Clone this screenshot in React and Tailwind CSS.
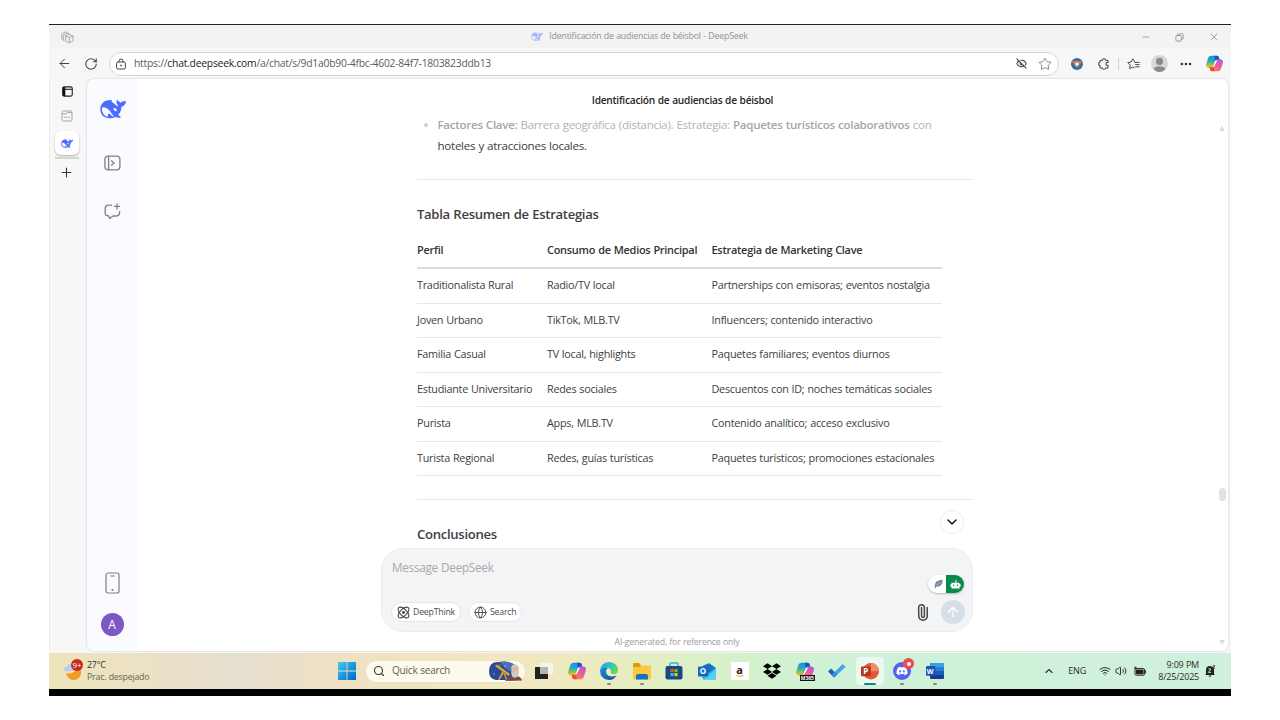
import React from "react";
import {
  ArrowLeft, RotateCw, Star, Minus, X, Ellipsis, Plus, ChevronDown, ChevronUp,
  ArrowUp, Search, Paperclip, Globe, EyeOff, Wifi, Volume2,
} from "lucide-react";
import { FaDropbox, FaDiscord } from "react-icons/fa";

function Whale({ className }) {
  return (
    <svg viewBox="0 0 78 58" className={className} fill="currentColor">
      <path
        fillRule="evenodd"
        d="M1 30C1 14 12 4 26 3C31 1 37 2 35 5C34 8 39 10 43 13C47 16 50 19 53 22C55 20 53 17 51 14C49 10 50 5 51 1C53 1 54 4 56 6C58 8 60 9 62 10C65 7 69 6 73 6C75 6 77 4 78 6C78 13 73 20 64 23C64 32 61 40 55 46C57 49 60 51 62 52C64 54 60 55 56 55C51 55 48 54 45 53C40 56 35 57 29 57C11 57 1 45 1 30ZM6 28C5 38 11 47 20 52C23 53 24 51 24 48C24 43 28 41 31 45C34 49 37 52 42 51C36 46 33 39 29 34C24 28 17 24 10 24C7 24 6 26 6 28ZM41 27C44 24 50 27 51 33C52 36 48 37 46 34C44 33 42 33 41 31C40 30 40 28 41 27Z"
      />
    </svg>
  );
}

function Copilot({ id, className }) {
  return (
    <svg viewBox="0 0 24 24" className={className}>
      <defs>
        <linearGradient id={`${id}a`} x1="0.4" y1="0" x2="0.3" y2="1">
          <stop offset="0" stopColor="#1f8fe8" />
          <stop offset="0.4" stopColor="#22a8c8" />
          <stop offset="0.7" stopColor="#7cc850" />
          <stop offset="1" stopColor="#f6c32c" />
        </linearGradient>
        <linearGradient id={`${id}b`} x1="0.9" y1="0" x2="0.3" y2="1">
          <stop offset="0" stopColor="#a65ce8" />
          <stop offset="0.5" stopColor="#ee5aa0" />
          <stop offset="1" stopColor="#fb8a3c" />
        </linearGradient>
      </defs>
      <path d="M8 1H15C17 1 17.8 2 18.2 3.4L19.2 7H16C14.2 7 13.2 8 12.7 9.6L10.4 16C10 17.4 9 18 8 18H4.2C.6 18 -.5 15.6 .4 12.4L3 4.4C3.8 2 5.4 1 8 1Z" fill={`url(#${id}a)`} />
      <path d="M12 1H15C17 1 17.8 2 18.2 3.4L19.2 7H16C14.5 7 13.6 7.6 13 8.8Z" fill="#1652c8" />
      <path d="M16 23H9C7 23 6.2 22 5.8 20.6L4.8 17H8C9.8 17 10.8 16 11.3 14.4L13.6 8C14 6.6 15 6 16 6H19.8C23.4 6 24.5 8.4 23.6 11.6L21 19.6C20.2 22 18.6 23 16 23Z" fill={`url(#${id}b)`} />
      <path d="M4.8 17H8C9.4 17 10.3 16.4 10.9 15.2L12 23H9C7 23 6.2 22 5.8 20.6Z" fill="#e8503c" />
      <path d="M13.2 7.6L16 7.6L11.2 16.6H8.2C10.2 16 10.8 14.6 11.3 13.2Z" fill="#fff" />
    </svg>
  );
}

function TitleBar() {
  return (
    <div className="flex h-6 shrink-0 items-center justify-between border-t border-[#222] bg-[#f3f3f3] pt-px pr-[11px] pl-3">
      <svg viewBox="0 0 14 14" className="size-[13px] text-[#a4a4a4]" fill="none" stroke="currentColor" strokeWidth="1" strokeLinejoin="round">
        <path d="M5 5.4L9 3.8L13 5.4V10.4L9 12.8L5 11ZM5 5.4L9 7.2L13 5.4M9 7.2V12.8" />
        <path d="M3.6 11L2.8 10.6V4.2L7 2.4L9.6 3.2M1.6 9.4L.8 9V3L5 1L7 1.6" />
      </svg>
      <div className="flex items-center gap-1.5 pl-[64px] text-[8.84px] text-[#929292]">
        <Whale className="h-[9px] w-3 text-[#a9b8fb]" />
        <span>Identificación de audiencias de béisbol - DeepSeek</span>
      </div>
      <div className="flex items-center gap-6 text-[#999]">
        <Minus size={10} strokeWidth={2} />
        <svg viewBox="0 0 10 10" className="size-[9px]" fill="none" stroke="currentColor" strokeWidth="1.1">
          <rect x="1" y="2.8" width="6" height="6.2" rx="1.2" />
          <path d="M3 2.6V2Q3 1 4 1H7.6Q9 1 9 2.4V6Q9 7 8 7H7.2" />
        </svg>
        <X size={12} strokeWidth={1.7} />
      </div>
    </div>
  );
}

function Toolbar() {
  return (
    <div className="flex h-[31px] shrink-0 items-center bg-[#f7f7f7] pl-[8px]">
      <ArrowLeft size={15} strokeWidth={1.6} className="text-[#444]" />
      <RotateCw size={14} strokeWidth={1.8} className="ml-3 text-[#444]" />
      <div className="ml-[11px] flex h-6 w-[950px] items-center rounded-full border border-[#d6d6d6] bg-white pr-[6px] pl-[5px]">
        <svg viewBox="0 0 12 12" className="size-3 text-[#444]" fill="none" stroke="currentColor" strokeWidth="1">
          <rect x="1.6" y="4" width="8.8" height="7" rx="1.4" />
          <path d="M4 4V3Q4 1 6 1T8 3V4" />
          <circle cx="6" cy="7.5" r=".5" fill="currentColor" />
        </svg>
        <span className="ml-[7px] text-[10.37px] text-[#5c5c5c]">
          https://<span className="text-[#222]">chat.deepseek.com</span>/a/chat/s/9d1a0b90-4fbc-4602-84f7-1803823ddb13
        </span>
        <EyeOff size={11} strokeWidth={2.4} className="ml-auto text-[#444]" />
        <Star size={14} strokeWidth={1.5} className="ml-[11px] text-[#777]" />
      </div>
      <svg viewBox="0 0 12 12" className="ml-3 size-3">
        <circle cx="6" cy="6" r="6" fill="#2f6fb6" />
        <path d="M.6 3.2L4 3.6Q6 2 8 3.6L11.4 3.2L8.6 6.4Q8.4 9 6 9T3.4 6.4Z" fill="#f08338" />
        <circle cx="6" cy="5.9" r="1.5" fill="#fff" />
      </svg>
      <svg viewBox="0 0 12 12" className="ml-[15px] size-3 text-[#444]" fill="none" stroke="currentColor" strokeWidth="1.1" strokeLinejoin="round">
        <path d="M3 2.2H4.4Q4.6 .7 6 .7T7.6 2.2H9Q10 2.2 10 3.2V4.4Q8 4.2 8 5.9T10 7.4V9Q10 10 9 10H7.6Q7.4 11.3 6 11.3T4.4 10H3Q2 10 2 9V7.6Q.6 7.4 .6 6T2 4.4V3.2Q2 2.2 3 2.2Z" />
      </svg>
      <div className="ml-2 h-3 w-px bg-[#d0d0d0]" />
      <svg viewBox="0 0 13 12" className="ml-2 h-3 w-[13px] text-[#444]" fill="none" stroke="currentColor" strokeWidth="1" strokeLinejoin="round" strokeLinecap="round">
        <path d="M7.6 3.6L5.8 .8L4.2 4L.8 4.5L3.2 7L2.7 10.6L5.8 9L7.4 9.8M7.8 4.4H12.2M8.6 6.6H12.2M8.6 8.8H12.2" />
      </svg>
      <svg viewBox="0 0 16 16" className="ml-[11px] size-[17px]">
        <circle cx="8" cy="8" r="8" fill="#d9d7d4" />
        <circle cx="8" cy="6" r="3.3" fill="#8b8885" />
        <path d="M2.4 13Q4 10.6 8 10.6T13.6 13Q11.4 16 8 16T2.4 13Z" fill="#8b8885" />
      </svg>
      <Ellipsis size={14} strokeWidth={2.6} className="ml-[11px] text-[#333]" />
      <Copilot id="tb" className="ml-[12.5px] size-[17px]" />
    </div>
  );
}

function TabStrip() {
  return (
    <div className="flex w-[38px] shrink-0 flex-col items-center border-l border-[#ececec] pt-[7px] pr-[3px]">
      <svg viewBox="0 0 12 12" className="size-[11px]" fill="none" stroke="#222" strokeWidth="1.2">
        <rect x=".8" y="1" width="10.4" height="10" rx="1.6" />
        <path d="M.8 3.6H11" />
        <rect x=".8" y="1.2" width="2.8" height="9.8" fill="#111" stroke="none" />
      </svg>
      <svg viewBox="0 0 12 12" className="mt-[13px] size-3" fill="none" stroke="#a5a5a5" strokeWidth="1">
        <rect x="1" y="1" width="10" height="10" rx="1.6" />
        <path d="M1 3.7H5.4L6.4 2.6H11" />
        <path d="M3 7.2H9" strokeDasharray="1.6 .6" />
      </svg>
      <div className="mt-[9px] flex h-6 w-6 items-center justify-center rounded-md bg-white shadow-[0_1px_2px_rgba(0,0,0,0.3)]">
        <Whale className="h-[9px] w-3 text-[#4d6bfe]" />
      </div>
      <div className="mt-0.5 h-0.5 w-6 bg-[#d4d4d4]" />
      <Plus size={15} strokeWidth={1.7} className="mt-1.5 mr-px text-[#333]" />
    </div>
  );
}

function Sidebar() {
  return (
    <div className="flex w-[50px] shrink-0 flex-col items-center rounded-l-[7px] bg-[#f9fbff] pt-[20px] pb-[15px] text-[#808080]">
      <Whale className="ml-[2px] h-5 w-[26px] text-[#4d6bfe]" />
      <svg viewBox="0 0 17 16" className="mt-[36px] h-4 w-[17px]" fill="none" stroke="currentColor" strokeWidth="1.3">
        <rect x=".9" y="1.2" width="15" height="13.6" rx="3" />
        <path d="M4.6 1.2V14.8" />
        <path d="M7.2 5.4L10 8L7.2 10.6" />
      </svg>
      <svg viewBox="0 0 17 17" className="mt-[32px] size-[17px]" fill="none" stroke="currentColor" strokeWidth="1.3" strokeLinecap="round" strokeLinejoin="round">
        <path d="M7.6 2.2H4.6Q1.2 2.2 1.2 5.6V9.4Q1.2 12.6 4.6 12.8L5.6 15.6L9 13H12.4Q15.6 12.8 15.6 9.6V8.6" />
        <path d="M13 .9V5.9M10.5 3.4H15.5" />
      </svg>
      <svg viewBox="0 0 15 22" className="mt-auto h-[22px] w-[15px]" fill="none" stroke="currentColor" strokeWidth="1.2">
        <rect x="1" y="1" width="13" height="20" rx="2" />
        <path d="M5.6 4H9.4" />
        <circle cx="7.5" cy="18" r=".5" fill="currentColor" />
      </svg>
      <div className="mt-[19px] flex size-[23px] items-center justify-center rounded-full bg-[#7e57c2] text-[12px] text-white">A</div>
    </div>
  );
}

const rows = [
  ["Traditionalista Rural", "Radio/TV local", "Partnerships con emisoras; eventos nostalgia"],
  ["Joven Urbano", "TikTok, MLB.TV", "Influencers; contenido interactivo"],
  ["Familia Casual", "TV local, highlights", "Paquetes familiares; eventos diurnos"],
  ["Estudiante Universitario", "Redes sociales", "Descuentos con ID; noches temáticas sociales"],
  ["Purista", "Apps, MLB.TV", "Contenido analítico; acceso exclusivo"],
  ["Turista Regional", "Redes, guías turísticas", "Paquetes turísticos; promociones estacionales"],
];

function Composer() {
  return (
    <div className="relative -ml-9 flex h-[84px] w-[592px] shrink-0 flex-col justify-between rounded-[22px] border border-[#ebedf1] bg-[#f3f4f6] pt-[10px] pr-[7px] pb-[7px] pl-[10px]">
      <div className="text-[11.75px] leading-4 text-[#a8a8a8]">Message DeepSeek</div>
      <div className="flex items-center text-[8.75px] text-[#4c4c4c]">
        <div className="-ml-px flex h-5 w-[70px] items-center gap-[3px] rounded-full border border-[#e4e6e9] bg-white pl-[5px]">
          <svg viewBox="0 0 14 14" className="size-[13px]" fill="none" stroke="currentColor" strokeWidth="1.2">
            <ellipse cx="7" cy="7" rx="7.4" ry="3.6" transform="rotate(45 7 7)" />
            <ellipse cx="7" cy="7" rx="7.4" ry="3.6" transform="rotate(-45 7 7)" />
            <circle cx="7" cy="7" r="1" fill="currentColor" />
          </svg>
          <span className="pt-px">DeepThink</span>
        </div>
        <div className="ml-[7px] flex h-5 w-[54px] items-center gap-[3px] rounded-full border border-[#e4e6e9] bg-white pl-[5px]">
          <Globe size={13} strokeWidth={1.8} />
          <span className="pt-px">Search</span>
        </div>
        <Paperclip size={17} strokeWidth={2.1} className="ml-auto -rotate-[45deg] text-[#444]" />
        <div className="ml-[10px] flex size-6 items-center justify-center rounded-full bg-[#d6dee8] text-white">
          <ArrowUp size={16} strokeWidth={2} />
        </div>
      </div>
      <div className="absolute top-[26px] right-[8px] flex h-[18px] w-9 overflow-hidden rounded-full bg-white shadow-[0_1px_2px_rgba(0,0,0,0.25)]">
        <div className="flex w-[18px] items-center justify-center pl-0.5">
          <svg viewBox="0 0 10 11" className="h-[10px] w-[9px]">
            <path d="M1 9.2Q.4 5 3 2.8Q6 .6 9.4 .4Q10 3 8.6 5.8Q6.6 9 2.4 8.6L1.4 10.6L.6 10.2Z" fill="#7b859c" />
            <path d="M2.4 8L6.6 3.8" stroke="#fff" strokeWidth=".5" />
          </svg>
        </div>
        <div className="flex flex-1 items-center justify-center bg-[#0a8a4a]">
          <svg viewBox="0 0 12 12" className="size-[11px]" fill="#fff">
            <path d="M5.5 4L6.4 .8L7.4 1.1L6.6 4H10.4V5.8H11.6V8.4H10.4V10.4H1.6V8.4H.4V5.8H1.6V4Z" />
            <circle cx="4" cy="6.8" r=".8" fill="#0a8a4a" />
            <circle cx="8" cy="6.8" r=".8" fill="#0a8a4a" />
          </svg>
        </div>
      </div>
    </div>
  );
}

function Chat() {
  return (
    <div className="relative flex min-w-0 flex-1 flex-col rounded-r-[7px] bg-white pl-[280px] text-[#404040]">
      <div className="-ml-9 h-[35px] w-[592px] shrink-0 pt-[10.5px] pl-[11px] text-center text-[10.18px] leading-[21px] font-semibold text-[#262626]">
        <span>Identificación de audiencias de béisbol</span>
      </div>
      <div className="flex text-[11.6px] leading-[21px]">
        <div className="mt-[9px] ml-[7px] size-1 shrink-0 rounded-full bg-[#cfcfcf]" />
        <div className="ml-[9.5px] whitespace-nowrap">
          <div className="text-[11.55px] text-[#b2b2b2]">
            <span className="font-semibold text-[#a6a6a6]">Factores Clave:</span> Barrera geográfica (distancia). Estrategia:{" "}
            <span className="font-semibold text-[#a6a6a6]">Paquetes turísticos colaborativos</span> con
          </div>
          <div>hoteles y atracciones locales.</div>
        </div>
      </div>
      <div className="mt-[23px] h-px w-[555px] shrink-0 bg-[#e7e7e7]" />
      <div className="mt-[22px] text-[13.1px] leading-6 font-semibold">Tabla Resumen de Estrategias</div>
      <div className="mt-[7px] w-[525px] text-[10.83px]">
        <div className="grid h-[36px] grid-cols-[130px_164.5px_1fr] items-center border-b-2 border-[#dcdcdc] pt-px text-[10.96px] font-semibold whitespace-nowrap text-[#333]">
          <div>Perfil</div>
          <div>Consumo de Medios Principal</div>
          <div>Estrategia de Marketing Clave</div>
        </div>
        {rows.map((r) => (
          <div key={r[0]} className="grid h-[34.5px] grid-cols-[130px_164.5px_1fr] items-center border-b border-[#e7e7e7] pb-px whitespace-nowrap">
            {r.map((c) => (
              <div key={c}>{c}</div>
            ))}
          </div>
        ))}
      </div>
      <div className="mt-[23px] h-px w-[555px] shrink-0 bg-[#e7e7e7]" />
      <div className="mt-[22px] mb-[2px] text-[13.15px] leading-6 font-semibold">Conclusiones</div>
      <Composer />
      <div className="-ml-9 w-[592px] pt-[3px] text-center text-[8.8px] leading-[14px] text-[#9c9c9c]">AI-generated, for reference only</div>
      <div className="absolute top-[431px] left-[803px] flex size-6 items-center justify-center rounded-full border border-[#ebebeb] bg-white text-[#111]">
        <ChevronDown size={16} strokeWidth={2.2} />
      </div>
      <svg viewBox="0 0 6 5" className="absolute top-[47px] right-[3px] h-[5px] w-1.5" fill="#dcdcdc"><path d="M3 0L6 5H0Z" /></svg>
      <div className="absolute top-[409px] right-0.5 h-[13px] w-[7px] rounded-full bg-[#e2e2e2]" />
      <svg viewBox="0 0 6 5" className="absolute right-[3px] bottom-[6px] h-[5px] w-1.5" fill="#dcdcdc"><path d="M3 5L0 0H6Z" /></svg>
    </div>
  );
}

function AppCell({ children, dot, active }) {
  return (
    <div className="flex w-[32.55px] shrink-0 justify-center">
      <div className={active ? "relative flex h-7 w-7 items-center justify-center rounded bg-white/60" : "relative flex h-7 w-7 items-center justify-center"}>
        {children}
        {dot && <div className="absolute bottom-0 h-[2px] w-1 rounded-full bg-[#888]" />}
        {active && <div className="absolute bottom-0 h-[2px] w-3 rounded-full bg-[#1f7f8c]" />}
      </div>
    </div>
  );
}

function Taskbar() {
  return (
    <div className="flex h-9 shrink-0 items-center bg-[linear-gradient(90deg,#eee5bd_0%,#ebe1c4_8%,#e5dfd0_16%,#efe0c3_24%,#f2e6be_36%,#efeabf_45%,#dff0c4_53%,#d3f1cd_60%,#cff1d8_68%,#cff0dc_100%)] text-[#2c2c2c]">
      <div className="flex w-[289px] items-center pl-[14px]">
        <div className="relative h-[22px] w-5">
          <svg viewBox="0 0 20 22" className="h-[22px] w-5">
            <path d="M3 13Q9 15 14 9Q19 9 18 14Q16 20 10 20Q5 20 3 13Z" fill="#f39a26" />
            <path d="M3 11Q0 11 .6 8.6Q1.2 7 3.4 7Q4.4 3.6 8 4Q11 5 10.6 11Z" fill="#b9cdf2" />
          </svg>
          <div className="absolute -top-px right-0 flex h-3 w-3 items-center justify-center rounded-full bg-[#c42b1c] text-[8px] text-white">9+</div>
        </div>
        <div className="ml-[4px] text-[8.8px] leading-3">
          <div>27°C</div>
          <div className="text-[#6a6557]">Prac. despejado</div>
        </div>
      </div>
      <svg viewBox="0 0 18 18" className="size-[18px] shrink-0">
        <defs>
          <linearGradient id="win" x1="0" y1="0" x2="1" y2="1"><stop offset="0" stopColor="#3ccbf4" /><stop offset="1" stopColor="#0067c8" /></linearGradient>
        </defs>
        <path d="M0 0H8.6V8.6H0ZM9.4 0H18V8.6H9.4ZM0 9.4H8.6V18H0ZM9.4 9.4H18V18H9.4Z" fill="url(#win)" />
      </svg>
      <div className="ml-[9px] flex h-[23px] w-[161px] shrink-0 items-center rounded-full border border-[#e8e2cb] bg-[#fdfaee] pr-px pl-[7px]">
        <Search size={12} strokeWidth={2.2} className="text-[#333]" />
        <span className="ml-[7px] text-[10.1px] text-[#5f5e58]">Quick search</span>
        <svg viewBox="0 0 36 20" className="ml-auto h-5 w-9">
          <path d="M1 10Q1 1 10 1Q20 -1 27 4L26 19H8Q1 18 1 10Z" fill="#2b4a93" />
          <path d="M12 1Q20 -1 27 4L25 12L18 8Z" fill="#5070b4" />
          <path d="M7 5L9 3.6L22 13L20.4 15ZM14 11L10 19H11.4L15.6 12.4L18 19H19.4L16.4 11Z" fill="#e2a437" />
          <circle cx="6" cy="13" r=".6" fill="#fff" /><circle cx="12" cy="4" r=".5" fill="#fff" /><circle cx="17" cy="5" r=".6" fill="#fff" />
          <path d="M17 20Q21 14.6 27 15Q33 15 34 19.4Z" fill="#7a4a38" />
          <path d="M23.4 7Q23.4 4 27 4T30.6 7V12Q30 15 27 15T23.4 12Z" fill="#ddb9a4" />
          <path d="M23.4 11Q27 10 30.6 11Q30.6 16.4 27 16.8T23.4 11ZM23.2 8Q23 3.4 27 3.4T31 8L30 6H24Z" fill="#cfcac8" />
        </svg>
      </div>
      <div className="ml-[2px] flex items-center">
        <AppCell>
          <svg viewBox="0 0 18 16" className="h-4 w-[18px]"><path d="M0 4H13V16H0Z" fill="#222" /><path d="M5 0H18V11H5Z" fill="#f6f4f0" /><path d="M5 4H13V11H5Z" fill="#b5b3af" /></svg>
        </AppCell>
        <AppCell><Copilot id="cp" className="size-[18px]" /></AppCell>
        <AppCell dot>
          <svg viewBox="0 0 20 20" className="size-[18px]">
            <defs>
              <linearGradient id="ed" x1="0" y1="0" x2="1" y2=".5"><stop offset="0" stopColor="#1b9de2" /><stop offset=".55" stopColor="#2fbfcf" /><stop offset="1" stopColor="#67d957" /></linearGradient>
              <linearGradient id="ee" x1="0" y1="0" x2="1" y2="1"><stop offset="0" stopColor="#1a8fdc" /><stop offset="1" stopColor="#0c4fa3" /></linearGradient>
            </defs>
            <path d="M0 9.6Q1 .6 10 0Q19.4 .6 20 8.6Q20 13.4 15 13.6Q11 13.6 12 11.4Q12.6 7 8 6.4Q3 6 0 11Z" fill="url(#ed)" />
            <path d="M0 9.6Q3.4 4.6 9 6.8Q6 8.6 7 12.4Q9 16.4 14 16Q17 15.6 18.4 14.6Q15.6 20 10 20Q.4 19 0 9.6Z" fill="url(#ee)" />
            <path d="M10.4 8.2Q7.6 10 8.6 13Q10.6 16.2 15.4 15.4Q17.4 15 18.4 14.2Q18.8 13.4 18 13.2Q15 14.4 12.6 13.4Q11.4 12.8 12 11.2Q12.2 9 10.4 8.2Z" fill="#e9eec8" />
          </svg>
        </AppCell>
        <AppCell dot>
          <svg viewBox="0 0 18 17" className="h-[17px] w-[18px]"><path d="M0 1Q0 0 1 0H6L8 2.4H17Q18 2.4 18 3.4V15.6Q18 16.4 17 16.4H1Q0 16.4 0 15.6Z" fill="#fcc93c" /><path d="M0 1Q0 0 1 0H6L8 2.4L6.6 4H0Z" fill="#dd9a14" /><path d="M3 16.4V13Q3 11 5 11H13Q15 11 15 13V16.4Z" fill="#1272c4" /></svg>
        </AppCell>
        <AppCell>
          <svg viewBox="0 0 18 18" className="size-[18px]"><path d="M5 5V2Q5 1 6 1H12Q13 1 13 2V5" fill="none" stroke="#35aeea" strokeWidth="1.5" /><rect x=".5" y="4" width="17" height="13.6" rx="2" fill="#174a85" /><path d="M5.4 7H8.6V10.2H5.4Z" fill="#f25022" /><path d="M9.4 7H12.6V10.2H9.4Z" fill="#7fba00" /><path d="M5.4 11H8.6V14.2H5.4Z" fill="#3fb1ef" /><path d="M9.4 11H12.6V14.2H9.4Z" fill="#ffb900" /></svg>
        </AppCell>
        <AppCell>
          <div className="relative flex items-center">
            <svg viewBox="0 0 18 17" className="h-[17px] w-[18px]"><path d="M4 3L11 0L18 5V15.4Q18 16.6 16.6 16.6H5L4 14Z" fill="#35b5ee" /><path d="M5 3L11 .6L17.6 5L11 10Z" fill="#1b6fc4" /><path d="M18 6V15.4Q18 16.6 16.6 16.6H6Z" fill="#50d0f4" /><rect y="3.6" width="10.4" height="10" rx="1" fill="#0f6cbd" /></svg>
            <span className="absolute left-[1.8px] text-[8px] leading-none font-bold text-white">O</span>
          </div>
        </AppCell>
        <AppCell>
          <div className="flex size-[18px] flex-col items-center justify-center bg-white text-[#222]">
            <span className="text-[11px] leading-[9px] font-bold">a</span>
            <svg viewBox="0 0 8 2" className="mt-px h-0.5 w-2" fill="none" stroke="#f39a26" strokeWidth="1"><path d="M.5 .4Q4 2.4 7.5 .4" /></svg>
          </div>
        </AppCell>
        <AppCell><FaDropbox size={18} className="text-black" /></AppCell>
        <AppCell>
          <div className="relative">
            <Copilot id="m3" className="size-[18px]" />
            <span className="absolute -right-px -bottom-px bg-[#111] px-px text-[5px] leading-[6px] font-bold text-white">M365</span>
          </div>
        </AppCell>
        <AppCell>
          <svg viewBox="0 0 18 14" className="h-[14px] w-[18px]"><path d="M6 13.6L3.6 11L14.6 0L17.6 3Z" fill="#44a3ee" /><path d="M0 7.4L3 4.4L9.2 10.4L6 13.6Z" fill="#1e5fb8" /><path d="M6 13.6L9.2 10.4L6.4 7.8L3.6 11Z" fill="#3a8fe0" /></svg>
        </AppCell>
        <AppCell active>
          <div className="relative flex items-center">
            <svg viewBox="0 0 18 17" className="h-[17px] w-[18px]"><circle cx="9.8" cy="8.3" r="8.2" fill="#e0593a" /><path d="M9.8 .1A8.2 8.2 0 0 1 18 8.3H9.8Z" fill="#f58a68" /><rect y="3.4" width="9.8" height="9.8" rx="1" fill="#b9351b" /></svg>
            <span className="absolute left-[2.4px] text-[8px] leading-none font-bold text-white">P</span>
          </div>
        </AppCell>
        <AppCell dot>
          <div className="relative flex size-[18px] items-center justify-center rounded-full bg-[#5463ee] text-white">
            <FaDiscord size={12} />
            <div className="absolute -top-[4px] -right-[3px] flex size-[11px] items-center justify-center rounded-full bg-[#ee4a4e]"><div className="size-1 rounded-full bg-white" /></div>
          </div>
        </AppCell>
        <AppCell dot>
          <div className="relative flex items-center">
            <svg viewBox="0 0 18 16" className="h-4 w-[18px]"><path d="M4 0H17Q18 0 18 1V4.4H4Z" fill="#3fa0ea" /><path d="M4 4H18V8H4Z" fill="#2a7dd6" /><path d="M4 8H18V12H4Z" fill="#195bbd" /><path d="M4 12H18V15Q18 16 17 16H5Q4 16 4 15Z" fill="#123f8c" /><rect y="3" width="9.4" height="9.8" rx="1" fill="#1a55b4" /></svg>
            <span className="absolute left-[1px] text-[7px] leading-none font-bold text-white">W</span>
          </div>
        </AppCell>
      </div>
      <div className="ml-auto flex items-center pr-[15px] text-[9px]">
        <ChevronUp size={12} strokeWidth={2.2} />
        <span className="ml-[13px]">ENG</span>
        <Wifi size={12} strokeWidth={2} className="ml-[13px]" />
        <Volume2 size={12} strokeWidth={1.9} className="ml-[4px]" />
        <svg viewBox="0 0 12 10" className="ml-[7px] h-[10px] w-3"><rect x="1" y="2.6" width="9.6" height="6.6" rx="1.4" fill="none" stroke="#222" strokeWidth="1" /><rect x="2" y="3.6" width="7.6" height="4.6" fill="#222" /><path d="M11 4.6H12V7.2H11ZM0 2L1.6 0V1.4H3.2L1.6 4V2.4H0Z" fill="#222" /></svg>
        <div className="ml-[10px] w-[43px] text-right leading-3">
          <div>9:09 PM</div>
          <div>8/25/2025</div>
        </div>
        <svg viewBox="0 0 12 12" className="ml-[5px] size-3"><path d="M2 9V5Q2 1 6 1Q10 1.6 10 5V9L11 10H1ZM4.6 10.6H7.4Q7 12 6 12T4.6 10.6Z" fill="#222" /><path d="M4.4 4H7L4.4 7.4H7" fill="none" stroke="#d0f0da" strokeWidth=".9" /><path d="M8.6 .8H11L8.8 3.2H11" fill="none" stroke="#222" strokeWidth=".8" /></svg>
      </div>
    </div>
  );
}

export default function App() {
  return (
    <div className="h-[720px] w-[1280px] overflow-hidden bg-white pt-6 pl-[49px] font-['Open_Sans','Noto_Sans',sans-serif] [&_*]:tracking-[-0.024em] [&_*]:[word-spacing:0.035em]">
      <div className="flex h-[672px] w-[1182px] flex-col bg-[#f7f7f7]">
        <TitleBar />
        <Toolbar />
        <div className="flex h-[574px] shrink-0 pr-[3px] pb-[2px]">
          <TabStrip />
          <div className="flex flex-1 rounded-[7px] shadow-[0_0_2px_rgba(0,0,0,0.25)]">
            <Sidebar />
            <Chat />
          </div>
        </div>
        <Taskbar />
        <div className="flex-1 bg-black" />
      </div>
    </div>
  );
}
